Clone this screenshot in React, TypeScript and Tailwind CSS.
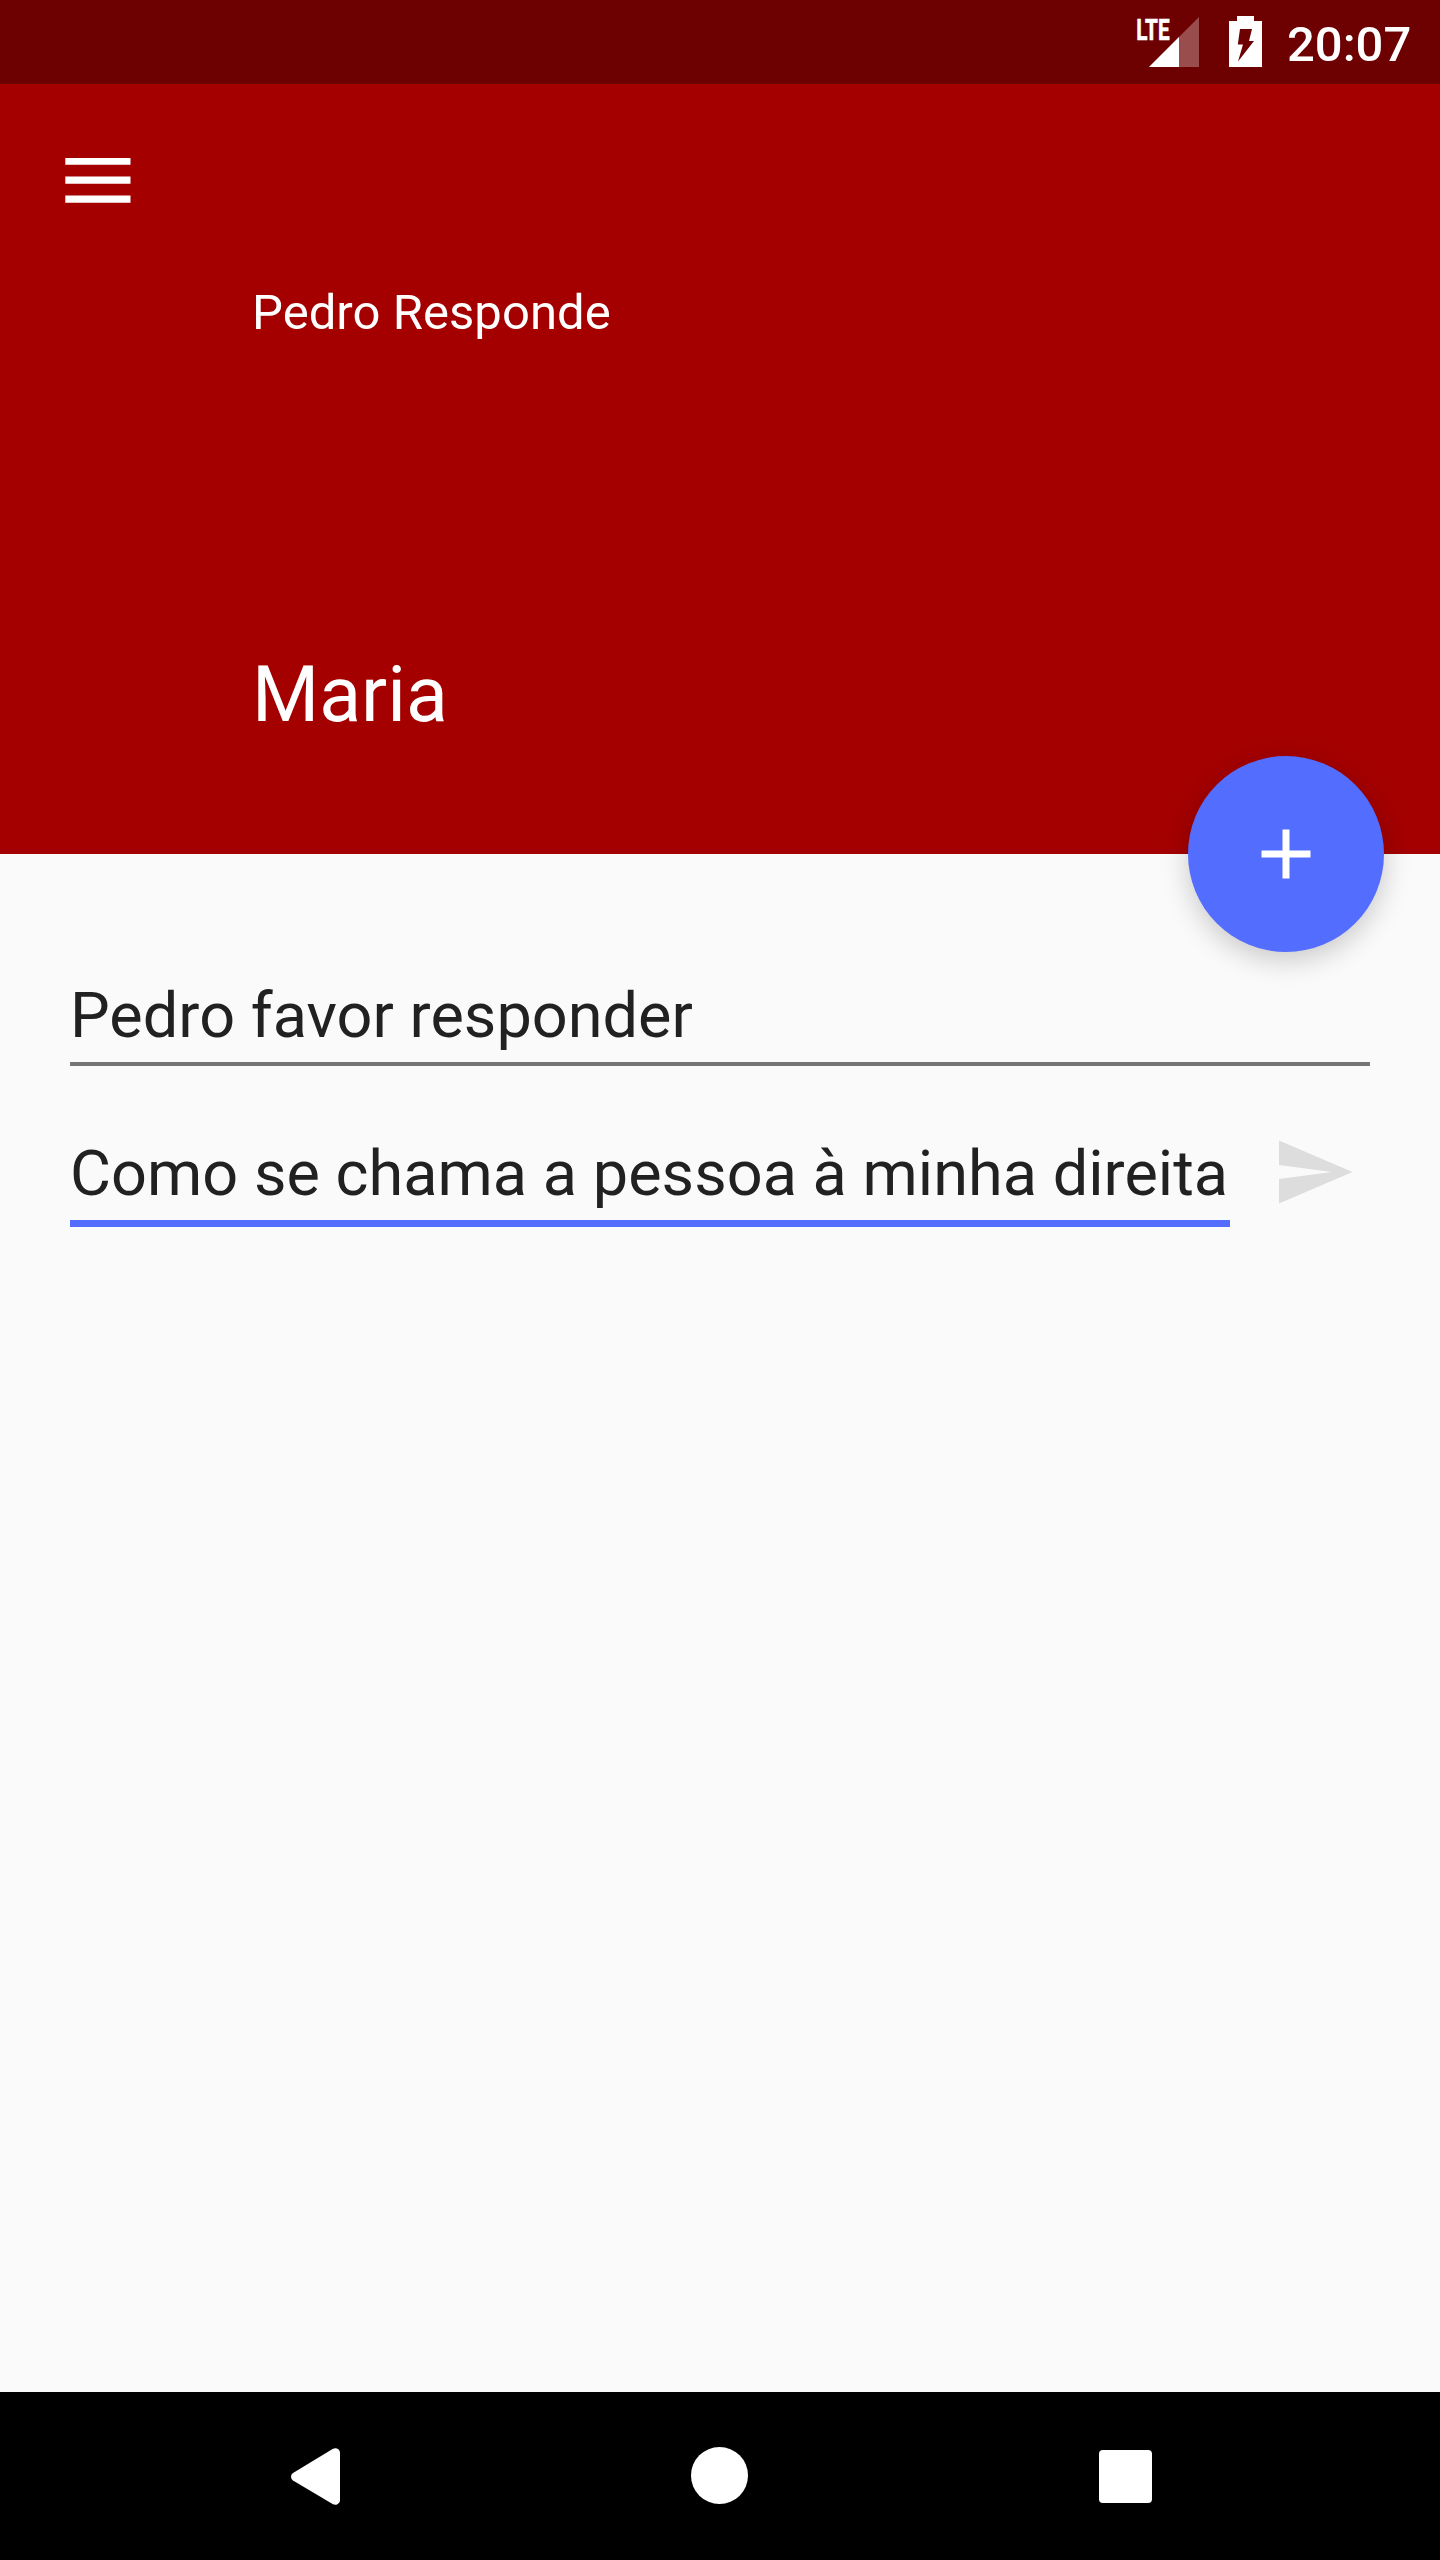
function StatusBar() {
  return (
    <div className="flex h-[84px] items-start bg-[#6d0000] pl-[1136px] text-white">
      {/* Signal strength */}
      <svg className="h-[84px] w-[64px] shrink-0" viewBox="0 0 64 84" fill="currentColor">
        <path d="M63 17v50H13z" fillOpacity="0.3" />
        <path d="M43 37v30H13z" />
        <text
          x="0.2"
          y="39.5"
          fontSize="29.5"
          fontWeight="700"
          textLength="33.4"
          lengthAdjust="spacingAndGlyphs"
          stroke="currentColor"
          strokeWidth="0.6"
          className="font-['Roboto',sans-serif]"
        >
          LTE
        </text>
      </svg>

      {/* Battery charging */}
      <svg className="ml-[29px] h-[84px] w-[33px] shrink-0" viewBox="0 0 33 84" fill="currentColor">
        <path
          fillRule="evenodd"
          d="M8 16h17v5h8v46H0V21h8zM11 29l-2.2 15.5h5.2L9 61.5 25 41h-5l3-12z"
        />
      </svg>

      <span className="ml-[25px] mt-4 text-[49px] leading-[58px] font-medium">20:07</span>
    </div>
  );
}

function Header() {
  return (
    <header className="relative flex h-[770px] flex-col bg-[#a40000] text-white">
      <button className="ml-[65px] mt-[74px] w-[66px]" aria-label="Menu">
        <svg className="h-[46px] w-[66px]" viewBox="0 0 66 46" fill="currentColor">
          <path d="M.3 -.4h65.2v7.2H.3zM.3 18.6h65.2v7.2H.3zM.3 37.6h65.2v7.2H.3z" />
        </svg>
      </button>
      <p className="ml-[252px] mt-[80px] text-[49px] leading-[58px] tracking-[0.05px]">Pedro Responde</p>
      <h1 className="ml-[252px] mt-[308px] text-[77px] leading-[90px]">Maria</h1>

      {/* Floating action button, sits over the bottom edge */}
      <button
        className="absolute right-[56px] -bottom-[98px] flex size-[196px] items-center justify-center rounded-full bg-[#536dfe] shadow-[0_8px_28px_rgba(0,0,0,0.2)]"
        aria-label="Adicionar"
      >
        <svg className="size-[84px]" viewBox="0 0 24 24" fill="currentColor">
          <path d="M19 13h-6v6h-2v-6H5v-2h6V5h2v6h6z" />
        </svg>
      </button>
    </header>
  );
}

function NavigationBar() {
  return (
    <nav className="flex h-[168px] items-start bg-black text-white">
      <svg className="ml-[291px] mt-[56px] h-[57px] w-[49px]" viewBox="0 0 49 57" fill="currentColor">
        <path d="M2 25L42 .8Q44 0 46 .6 49 2 49 5V52Q49 55 46 56.4 44 57 42 56.2L2 32.5Q0 31 0 28.7T2 25z" />
      </svg>
      <div className="ml-[351px] mt-[55px] size-[57px] rounded-full bg-white" />
      <div className="ml-[351px] mt-[58px] size-[53px] rounded-[4px] bg-white" />
    </nav>
  );
}

export default function App() {
  return (
    <div className="flex h-[2560px] w-[1440px] flex-col overflow-hidden bg-[#fafafa] font-['Roboto',sans-serif]">
      <StatusBar />
      <Header />

      <main className="flex-1 px-[70px] pt-[125px] text-[63px] leading-[74px] tracking-[0.03px] text-[#212121]">
        <div className="h-[87px] border-b-4 border-[#757575]">Pedro favor responder</div>

        <div className="mt-[71px] flex items-start">
          <div className="h-[90px] w-[1160px] whitespace-nowrap border-b-[7px] border-[#536dfe]">
            Como se chama a pessoa à minha direita
          </div>
          <button className="-mt-[7px] ml-[42px] text-[#dddddd]" aria-label="Enviar">
            <svg className="size-[84px]" viewBox="0 0 24 24" fill="currentColor">
              <path d="M2.01 21L23 12 2.01 3 2 10l15 2-15 2z" />
            </svg>
          </button>
        </div>
      </main>

      <NavigationBar />
    </div>
  );
}
